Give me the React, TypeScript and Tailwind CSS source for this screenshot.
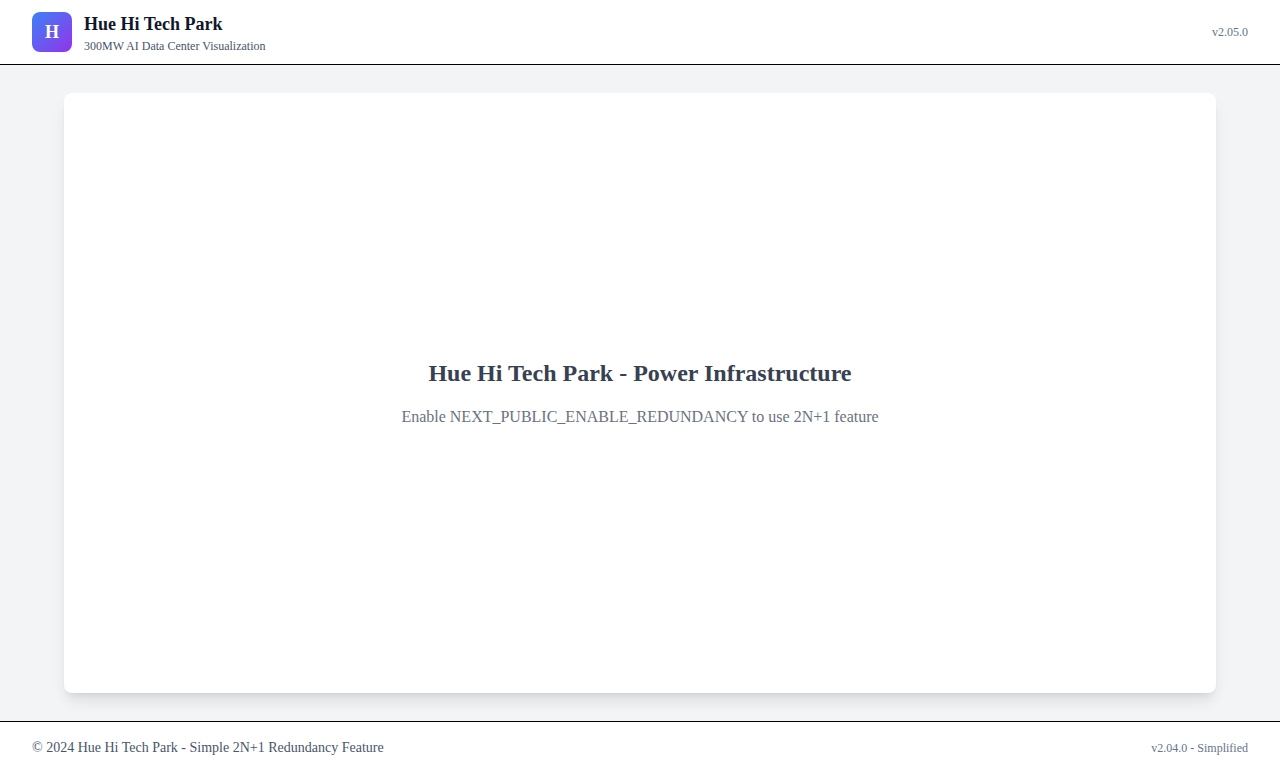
export default function App() {
  return (
    <div className="flex min-h-screen flex-col bg-gray-100 font-['Liberation_Serif',serif] antialiased">
      <header className="border-b border-black bg-white px-8">
        <div className="flex h-16 items-center justify-between">
          <div className="flex items-center gap-3">
            <div className="flex size-10 items-center justify-center rounded-lg bg-linear-to-br/srgb from-[#3b82f6] to-[#9333ea] text-lg font-bold text-white">
              H
            </div>
            <div>
              <h1 className="text-lg font-bold text-[#0f172a]">Hue Hi Tech Park</h1>
              <p className="text-xs text-[#475569]">300MW AI Data Center Visualization</p>
            </div>
          </div>
          <span className="text-xs text-[#64748b]">v2.05.0</span>
        </div>
      </header>

      <main className="flex grow flex-col px-16 py-7">
        <section className="flex grow flex-col items-center justify-center gap-4 rounded-lg bg-white shadow-lg">
          <h2 className="text-2xl font-bold text-[#374151]">Hue Hi Tech Park - Power Infrastructure</h2>
          <p className="text-base text-[#6b7280]">
            Enable NEXT_PUBLIC_ENABLE_REDUNDANCY to use 2N+1 feature
          </p>
        </section>
      </main>

      <footer className="flex items-center justify-between border-t border-black bg-white px-8 py-4">
        <p className="text-sm text-[#475569]">© 2024 Hue Hi Tech Park - Simple 2N+1 Redundancy Feature</p>
        <span className="text-xs text-[#64748b]">v2.04.0 - Simplified</span>
      </footer>
    </div>
  );
}
